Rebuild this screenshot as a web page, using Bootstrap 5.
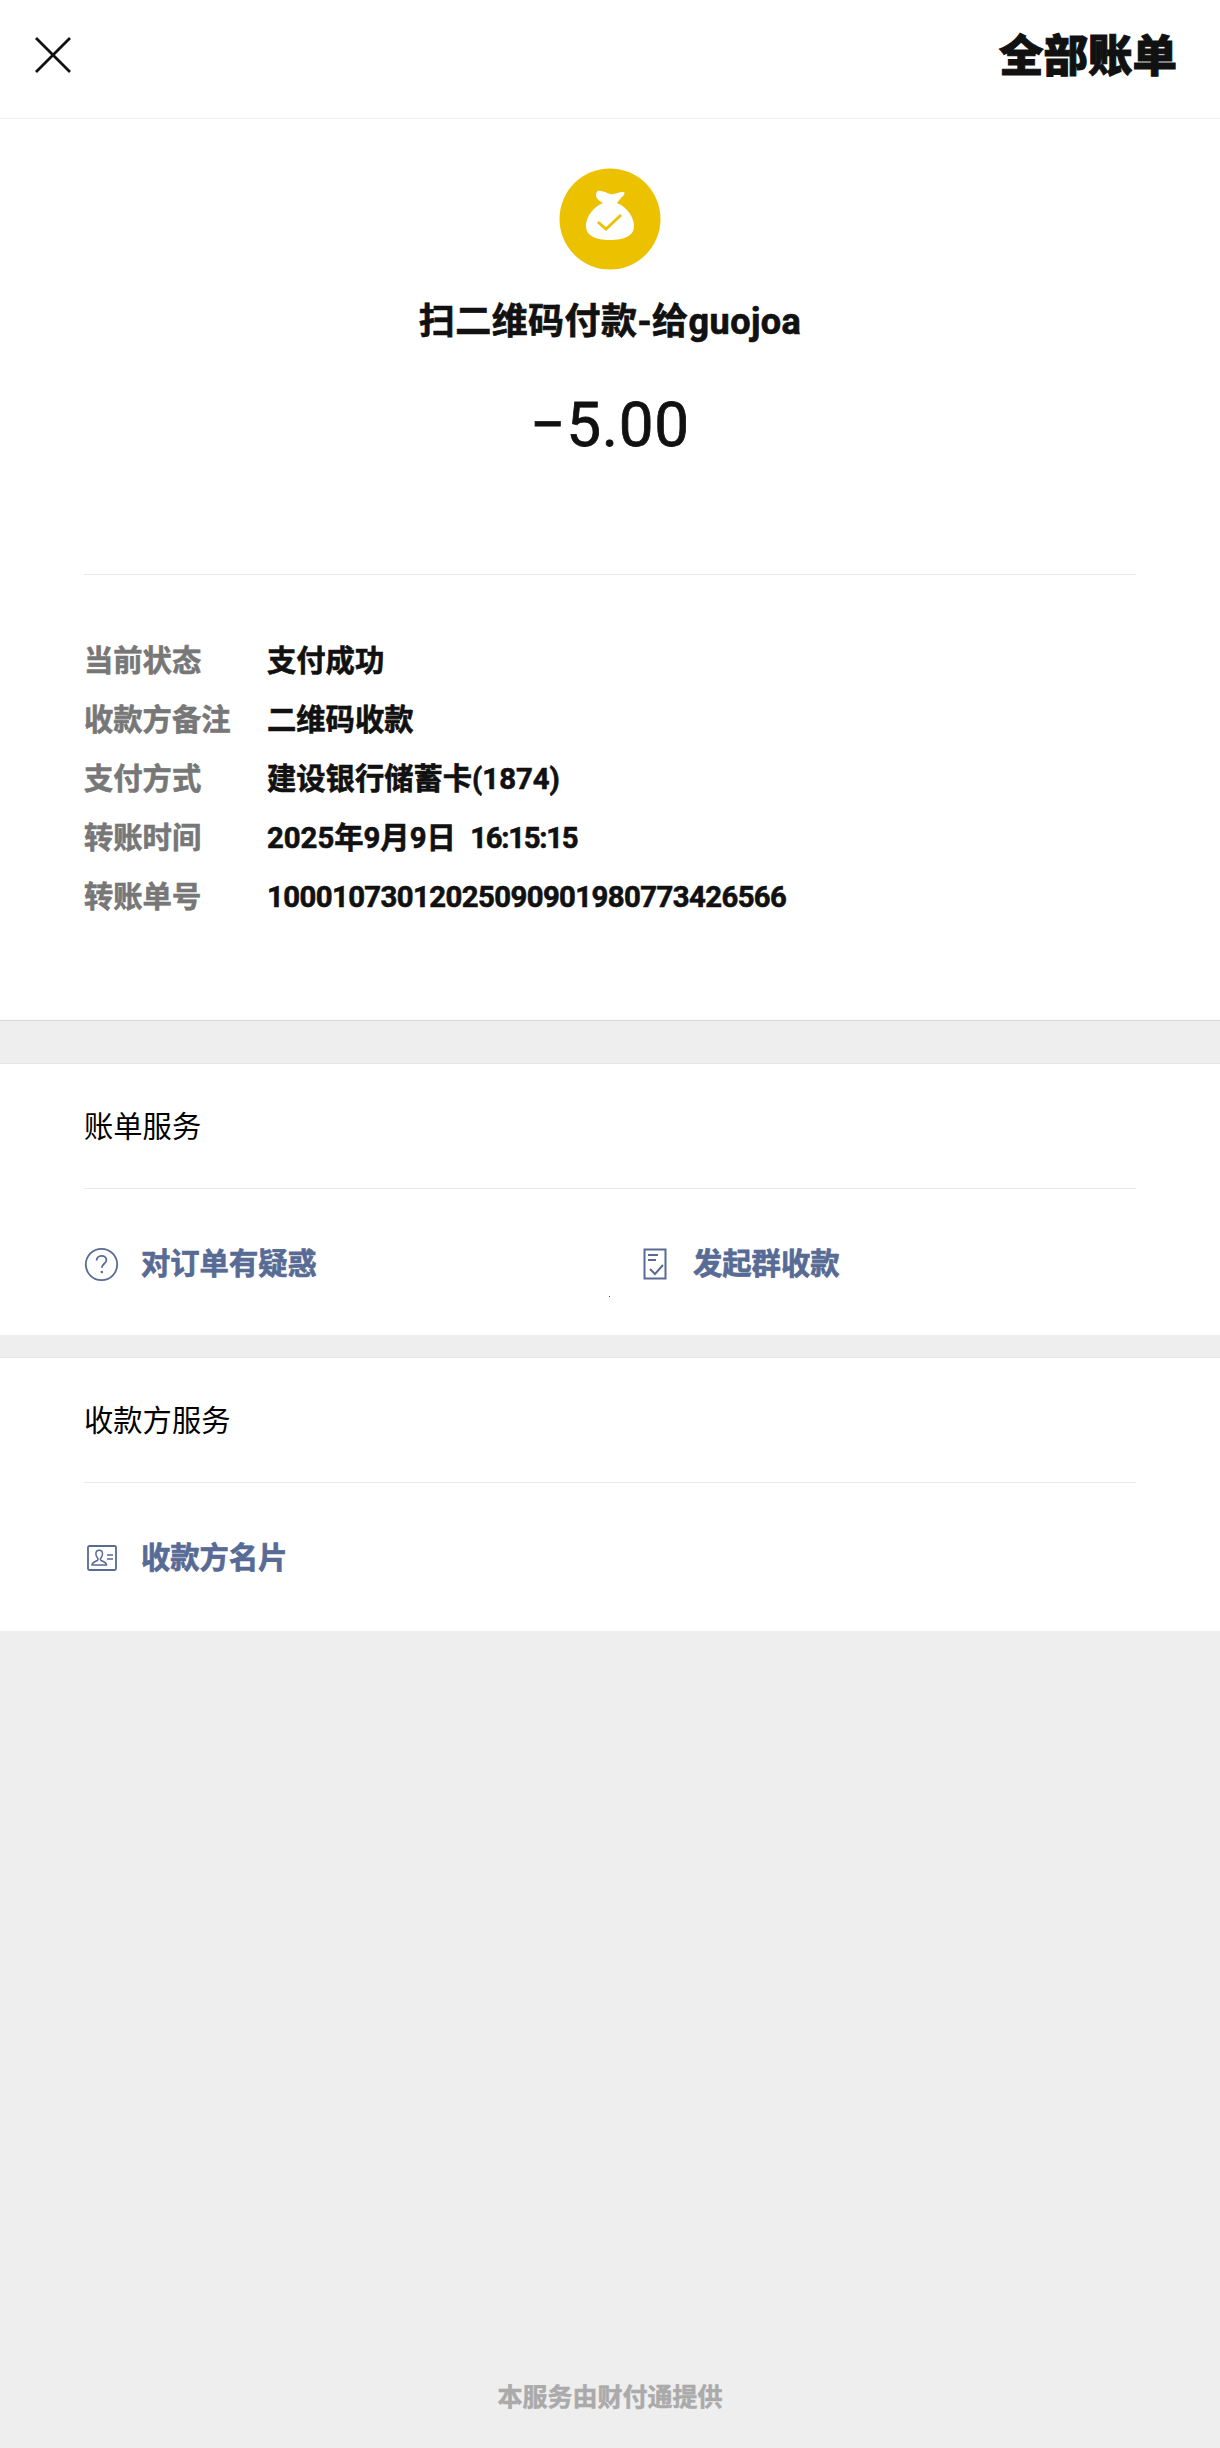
<!DOCTYPE html>
<html lang="zh-CN">
<head>
<meta charset="utf-8">
<title>账单详情</title>
<link href="https://cdn.jsdelivr.net/npm/bootstrap@5.3.0/dist/css/bootstrap.min.css" rel="stylesheet">
<style>
html,body{margin:0;background:#eee}
body{font-family:Roboto,"Noto Sans CJK SC",sans-serif;color:#111}
.pg{min-height:2448px;background:#eee}
.hd{height:119px;padding:0 43px 0 35px;border-bottom:1px solid #f0f0f0;background:#fff}
.hd-x{margin-bottom:8px}
.hd-t{font-size:44.5px;font-weight:900;line-height:1;padding-bottom:3px;-webkit-text-stroke:1px #111}
.sum{height:902px;padding-top:49px;background:#fff;border-bottom:1px solid #d9d9d9}
.logo{display:block;margin:0 auto;width:102px;height:102px}
.ttl{font-size:36px;font-weight:700;line-height:50px;margin-top:27px;text-align:center;letter-spacing:.45px;-webkit-text-stroke:.7px #111}
.amt{font-size:62px;line-height:72px;margin-top:42px;text-align:center;letter-spacing:.7px;-webkit-text-stroke:.8px #111}
.dv{height:1px;background:#e9e9e9;margin:0 84px}
.dv-a{margin-top:113px}
.rows{padding:67px 84px 0;display:grid;grid-template-columns:183px 1fr;row-gap:21px}
.rows>div{font-size:29.3px;line-height:38px;font-weight:700;white-space:pre;-webkit-text-stroke:.6px #111}
.rows>.lb{color:#777;-webkit-text-stroke:.6px #777}
.tg{letter-spacing:-1.3px}
.num{letter-spacing:-.58px}
.svc{background:#fff;border-top:1px solid #e6e6e6;position:relative}
.sv1{margin-top:42px;height:272px}
.sv2{margin-top:22px;height:274px}
.sv-t{font-size:29.3px;line-height:40px;font-weight:400;padding:43px 84px 41px;color:#000}
.sv-r{padding:0 84px;margin-top:55px;height:40px}
.it{flex:none;font-size:29.3px;font-weight:700;color:#576b95;line-height:40px;width:553px;-webkit-text-stroke:.7px #576b95}
.it svg{flex:none;display:block}
.ml-q{margin-left:22px}
.ic-d{margin-left:6px}
.ml-d{margin-left:26px}
.ic-c{margin-left:3px}
.ml-c{margin-left:24px}
.dot{position:absolute;left:609px;top:232px;width:1px;height:1px;background:#555}
.ft{text-align:center;color:#aaa;font-size:25px;font-weight:700;line-height:36px;padding-bottom:32px;-webkit-text-stroke:.5px #aaa}
</style>
</head>
<body>
<div class="pg d-flex flex-column">
  <header class="hd d-flex justify-content-between align-items-center">
    <svg class="hd-x" width="36" height="36" viewBox="0 0 36 36" aria-label="关闭"><path d="M1 1 35 35M35 1 1 35" stroke="#111" stroke-width="2.8" fill="none"/></svg>
    <div class="hd-t">全部账单</div>
  </header>
  <section class="sum">
    <svg class="logo" viewBox="559 168 102 102">
      <circle cx="610" cy="219" r="50.5" fill="#ecc200"/>
      <path fill="#fff" d="M598 191C602 190 606 193 610 194C614 195 619 192 623 192C625 192 625 194 623 196C621 198 619 200 617 203C627 207 634 217 634 226C634 236 624 240 610 240C596 240 586 236 586 226C586 217 593 207 603 203C600 201 596 199 596 195C596 193 597 191 598 191Z"/>
      <path fill="none" stroke="#ecc200" stroke-width="2.8" d="M598 222l8 7 15-14"/>
    </svg>
    <div class="ttl">扫二维码付款-给guojoa</div>
    <div class="amt">−5.00</div>
    <div class="dv dv-a"></div>
    <div class="rows">
      <div class="lb">当前状态</div><div>支付成功</div>
      <div class="lb">收款方备注</div><div>二维码收款</div>
      <div class="lb">支付方式</div><div>建设银行储蓄卡(1874)</div>
      <div class="lb">转账时间</div><div>2025年9月9日  <span class="tg">16:15:15</span></div>
      <div class="lb">转账单号</div><div class="num">10001073012025090901980773426566</div>
    </div>
  </section>
  <section class="svc sv1">
    <div class="sv-t">账单服务</div>
    <div class="dv"></div>
    <div class="sv-r d-flex">
      <div class="it d-flex align-items-center">
        <svg width="35" height="35" viewBox="0 0 35 35"><circle cx="17.5" cy="17.5" r="15.7" fill="none" stroke="#576b95" stroke-width="1.8"/><path d="M12.600 13.600c0-3 2.200-4.800 4.900-4.800s4.900 1.800 4.900 4.300c0 3.600-4.600 3.700-4.600 7.600" fill="none" stroke="#576b95" stroke-width="1.800"/><circle cx="17.800" cy="25" r="1.300" fill="#576b95"/></svg>
        <span class="ml-q">对订单有疑惑</span>
      </div>
      <div class="it d-flex align-items-center">
        <svg class="ic-d" width="24" height="32" viewBox="0 0 24 32"><path d="M1.500 1.500h21v29h-21z" fill="none" stroke="#576b95" stroke-width="2"/><path d="M5 7h10M5 12h8" stroke="#576b95" stroke-width="2"/><path d="M7 21l5 5 8-9" fill="none" stroke="#576b95" stroke-width="2"/></svg>
        <span class="ml-d">发起群收款</span>
      </div>
    </div>
    <div class="dot"></div>
  </section>
  <section class="svc sv2">
    <div class="sv-t">收款方服务</div>
    <div class="dv"></div>
    <div class="sv-r d-flex">
      <div class="it d-flex align-items-center">
        <svg class="ic-c" width="30" height="26" viewBox="0 0 30 26"><rect x="1" y="1" width="28" height="24" rx="1.500" fill="none" stroke="#576b95" stroke-width="1.800"/><path d="M5 20c0-3 4-3.500 5.500-4.700 .8-.8 .6-1.800-.3-2.800-1-1.100-1.300-2.300-1.300-3.700 0-2.100 1.300-3.500 3.300-3.500s3.300 1.400 3.300 3.500c0 1.400-.3 2.600-1.300 3.700-.9 1-1.100 2-.3 2.800C15.400 16.500 19.500 17 19.500 20z" fill="none" stroke="#576b95" stroke-width="1.500"/><path d="M20 10h6M20 14h6" stroke="#576b95" stroke-width="1.500"/></svg>
        <span class="ml-c">收款方名片</span>
      </div>
    </div>
  </section>
  <footer class="ft mt-auto">本服务由财付通提供</footer>
</div>
<script src="https://cdn.jsdelivr.net/npm/bootstrap@5.3.0/dist/js/bootstrap.bundle.min.js"></script>
</body>
</html>
